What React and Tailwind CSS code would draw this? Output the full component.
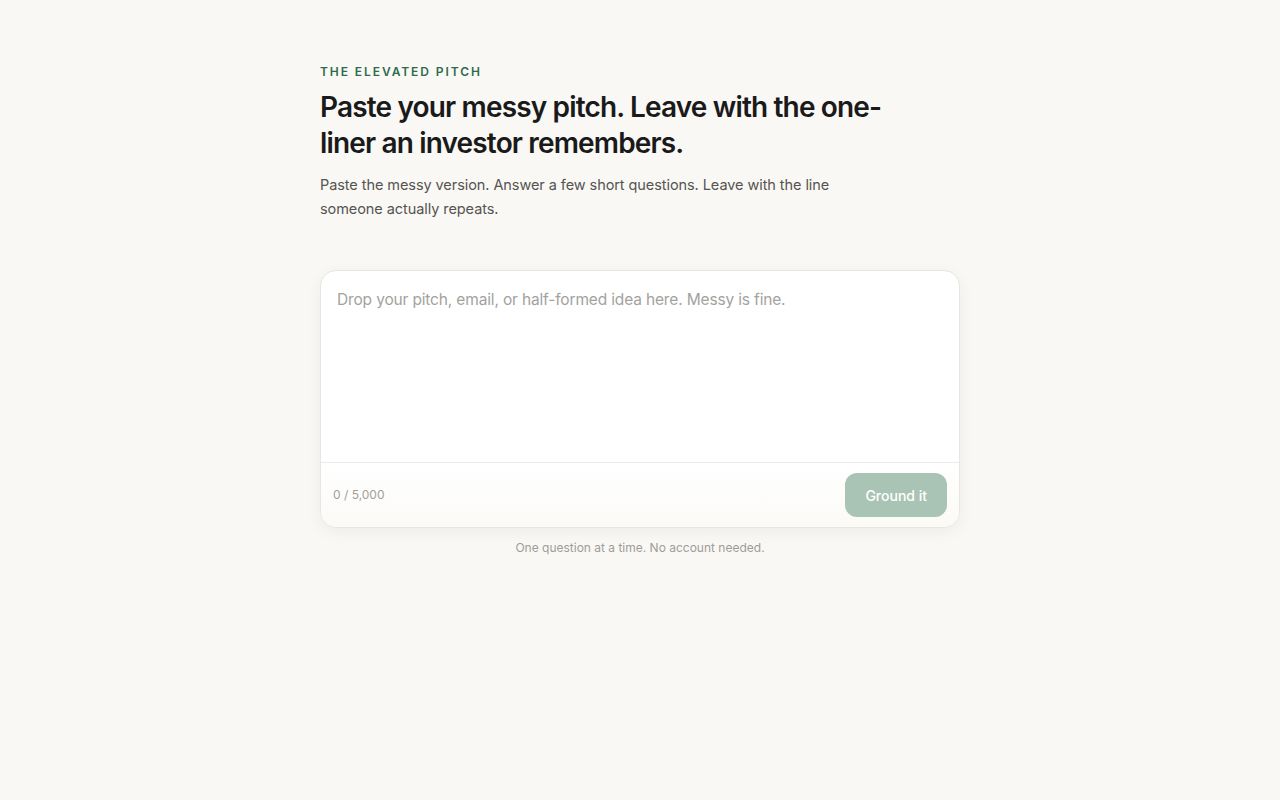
import { useState } from 'react'

export default function App() {
  const [text, setText] = useState('')

  return (
    <div className="min-h-screen bg-[#f9f8f5] font-['Inter',sans-serif] text-[#1a1a1a] antialiased">
      <main className="mx-auto w-[640px] pt-[64px]">
        {/* Hero */}
        <p className="text-[12px] font-semibold uppercase tracking-[0.16em] text-[#2f6b4b] leading-[16px]">
          The Elevated Pitch
        </p>
        <h1 className="mt-[9px] max-w-[570px] text-[28px] font-semibold leading-[36px] tracking-[-0.03em] text-[#1a1a1a]">
          Paste your messy pitch. Leave with the one-liner an investor remembers.
        </h1>
        <p className="mt-[12px] max-w-[530px] text-[14.5px] leading-[24px] tracking-[-0.005em] text-[#555450]">
          Paste the messy version. Answer a few short questions. Leave with the line someone actually repeats.
        </p>

        {/* Input card */}
        <div className="mt-[49px] overflow-hidden rounded-[16px] border border-[#e8e6e1] bg-white shadow-[0_4px_16px_rgba(0,0,0,0.05)]">
          <textarea
            value={text}
            onChange={e => setText(e.target.value.slice(0, 5000))}
            placeholder="Drop your pitch, email, or half-formed idea here. Messy is fine."
            className="block h-[191px] w-full resize-none bg-transparent px-[16px] pt-[17px] text-[15.5px] leading-[24px] tracking-[-0.01em] text-[#1a1a1a] outline-none placeholder:text-[#a3a29e]"
          />
          <div className="flex h-[65px] items-center justify-between border-t border-[#ecebe7] bg-gradient-to-b from-white to-[#fbfaf7] px-[12px]">
            <span className="text-[12px] text-[#a09f9b]">{text.length.toLocaleString('en-US')} / 5,000</span>
            <button
              disabled={!text.trim()}
              className="h-[44px] rounded-[12px] bg-[#a9c4b5] px-[20px] text-[14px] font-medium text-white"
            >
              Ground it
            </button>
          </div>
        </div>

        <p className="mt-[11px] text-center text-[12px] text-[#9e9d99]">
          One question at a time. No account needed.
        </p>
      </main>
    </div>
  )
}
